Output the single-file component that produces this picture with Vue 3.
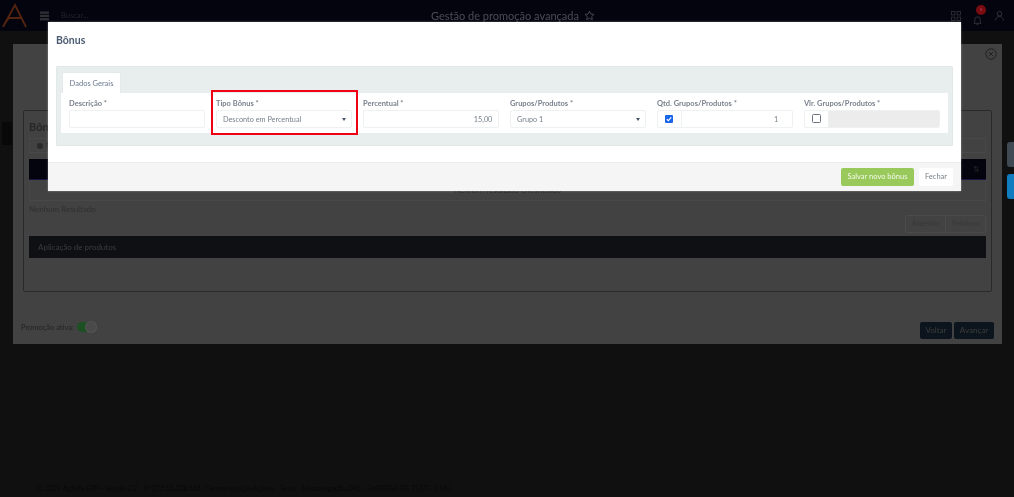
<script setup>
const fields = [
  { label: 'Descrição *', kind: 'text', value: '' },
  { label: 'Tipo Bônus *', kind: 'select', value: 'Desconto em Percentual' },
  { label: 'Percentual *', kind: 'number', value: '15,00' },
  { label: 'Grupos/Produtos *', kind: 'select', value: 'Grupo 1' },
  { label: 'Qtd. Grupos/Produtos *', kind: 'check', checked: true, value: '1' },
  { label: 'Vlr. Grupos/Produtos *', kind: 'check', checked: false, value: '' }
]
</script>

<template>
  <div class="page">
    <header class="topbar">
      <svg class="logo" width="30" height="30" viewBox="0 0 30 30" fill="none" stroke="#552410" stroke-width="1.8">
        <path d="M3 26 L15 4 L26 26" />
        <path d="M8 17 H21 M5 22 L9 17" />
      </svg>
      <svg class="menu" width="10" height="10" viewBox="0 0 10 10" fill="#2f2f36">
        <rect x="0" y="0.5" width="9" height="2.3" />
        <rect x="0" y="3.8" width="9" height="2.3" />
        <rect x="0" y="7.1" width="9" height="2.3" />
      </svg>
      <span class="search">Buscar...</span>
      <div class="title">
        <span>Gestão de promoção avançada</span>
        <svg width="11" height="11" viewBox="0 0 24 24" fill="none" stroke="#4a4a52" stroke-width="2">
          <path d="M12 2.5l3 6.3 6.8.9-5 4.7 1.3 6.8-6.1-3.3-6.1 3.3 1.3-6.8-5-4.7 6.8-.9z" />
        </svg>
      </div>
      <div class="top-icons">
        <svg width="10" height="10" viewBox="0 0 10 10" fill="none" stroke="#2f2f36" stroke-width="0.9">
          <rect x="0.5" y="0.5" width="3.4" height="3.4" />
          <rect x="6.1" y="0.5" width="3.4" height="3.4" />
          <rect x="0.5" y="6.1" width="3.4" height="3.4" />
          <rect x="6.1" y="6.1" width="3.4" height="3.4" />
        </svg>
        <span class="bell">
          <svg width="11" height="11" viewBox="0 0 24 24" fill="none" stroke="#35353c" stroke-width="2">
            <path d="M4 18c2-2 2-4 2-8a6 6 0 0 1 12 0c0 4 0 6 2 8z" />
            <path d="M10 21h4" />
          </svg>
          <b class="badge">8</b>
        </span>
        <svg width="11" height="11" viewBox="0 0 24 24" fill="none" stroke="#35353c" stroke-width="2">
          <circle cx="12" cy="8" r="5" />
          <path d="M3 23c1-6 5-9 9-9s8 3 9 9" />
        </svg>
      </div>
    </header>

    <main class="backdrop">
      <aside class="side"><span class="side-active"></span></aside>

      <section class="wizard">
        <svg class="wizard-close" width="12" height="12" viewBox="0 0 12 12" fill="none" stroke="#222" stroke-width="1">
          <circle cx="6" cy="6" r="5.2" />
          <path d="M3.8 3.8l4.4 4.4M8.2 3.8l-4.4 4.4" />
        </svg>
        <div class="box">
          <h2 class="box-title">Bônus</h2>
          <div class="new-row"><span class="dot"></span><span>Novo</span></div>
          <div class="table-head"><span class="sort">⇅</span></div>
          <div class="table-empty">Nenhum resultado encontrado</div>
          <div class="pager-row">
            <span>Nenhum Resultado</span>
            <div class="pager"><span>Anterior</span><span>Próximo</span></div>
          </div>
          <div class="apply-bar">Aplicação de produtos</div>
        </div>
        <div class="wizard-foot">
          <div class="active-toggle">
            <span>Promoção ativa:</span>
            <span class="toggle"><i></i></span>
          </div>
          <div class="nav-buttons">
            <span class="nav-btn voltar">Voltar</span>
            <span class="nav-btn avancar">Avançar</span>
          </div>
        </div>
      </section>

      <div class="side-tabs">
        <span class="tab-gray"></span>
        <span class="tab-blue"></span>
      </div>
    </main>

    <footer class="copyright">
      © 2024 <b>Agilefy ERP</b> - Versão 2.2 - IP:<b>177.55.228.161</b> | Demonstração Agilefy - Teste - <b>Homologação DRL</b> - EMPRESA DE TESTE B MG
    </footer>

    <section class="modal">
      <div class="modal-head">Bônus</div>
      <div class="modal-body">
        <div class="panel">
          <div class="tab">Dados Gerais</div>
          <div class="form">
            <div v-for="f in fields" :key="f.label" class="field">
              <label class="label">{{ f.label }}</label>
              <div v-if="f.kind === 'text'" class="input"></div>
              <div v-else-if="f.kind === 'select'" class="input select">
                <span>{{ f.value }}</span><i class="caret"></i>
              </div>
              <div v-else-if="f.kind === 'number'" class="input num">{{ f.value }}</div>
              <div v-else class="input group">
                <span class="addon">
                  <svg v-if="f.checked" width="8" height="8" viewBox="0 0 8 8">
                    <rect width="8" height="8" rx="1" fill="#1a66e8" />
                    <path d="M1.8 4.2l1.5 1.5 3-3.3" fill="none" stroke="#fff" stroke-width="1.1" />
                  </svg>
                  <span v-else class="unchecked"></span>
                </span>
                <span class="group-value" :class="{ disabled: !f.checked }">{{ f.value }}</span>
              </div>
            </div>
          </div>
        </div>
      </div>
      <div class="modal-foot">
        <span class="btn save">Salvar novo bônus</span>
        <span class="btn close">Fechar</span>
      </div>
      <div class="highlight"></div>
    </section>
  </div>
</template>

<style>
html, body { margin: 0; background: #101010; }
</style>

<style scoped>
.page {
  position: relative;
  width: 1014px;
  height: 497px;
  overflow: hidden;
  background: #101010;
  font-family: Lato, "Open Sans", sans-serif;
  filter: blur(0.45px);
}
.topbar {
  height: 31px;
  background: #04040f;
  display: flex;
  align-items: center;
  position: relative;
}
.logo { flex: none; }
.menu { margin-left: 10px; flex: none; }
.search { margin-left: 11px; font-size: 7.5px; color: #24242c; }
.title {
  position: absolute;
  left: 431px;
  top: 8px;
  display: flex;
  align-items: center;
  gap: 5px;
  font-size: 11px;
  line-height: 15px;
  color: #4c4c54;
}
.top-icons {
  position: absolute;
  right: 9px;
  top: 10px;
  display: flex;
  align-items: center;
  gap: 11px;
}
.bell { position: relative; display: block; height: 11px; }
.badge {
  position: absolute;
  left: 4px;
  top: -5px;
  width: 10px;
  height: 10px;
  border-radius: 50%;
  background: #7a0c10;
  font-size: 4px;
  line-height: 10px;
  text-align: center;
  color: #a35;
}
.backdrop {
  height: 440px;
  display: flex;
  padding-top: 13px;
  box-sizing: border-box;
  align-items: flex-start;
}
.side { width: 13px; flex: none; height: 100%; position: relative; }
.side-active {
  position: absolute;
  left: 2px;
  top: 78px;
  width: 10px;
  height: 23px;
  background: #080808;
}
.wizard {
  position: relative;
  width: 989px;
  height: 300px;
  flex: none;
  background: #424242;
  box-sizing: border-box;
  padding: 66px 10px 0 10px;
  display: flex;
  flex-direction: column;
}
.wizard-close { position: absolute; right: 5px; top: 4px; }
.box {
  height: 182px;
  box-sizing: border-box;
  border: 1px solid #2a2a2a;
  border-radius: 2px;
  padding: 9px 5px 0 5px;
  display: flex;
  flex-direction: column;
  color: #2e2e2e;
}
.box-title { margin: 0; font-size: 11px; line-height: 14px; font-weight: 700; color: #262626; }
.new-row {
  height: 15px;
  margin-top: 4px;
  display: flex;
  align-items: center;
  gap: 3px;
  font-size: 7.5px;
  color: #2a2a2a;
  border: 1px solid #484848;
  padding-left: 7px;
  box-sizing: border-box;
}
.dot { width: 6px; height: 6px; border-radius: 50%; background: #2a2a2a; }
.table-head {
  height: 21px;
  margin-top: 6px;
  box-sizing: border-box;
  background: #04040f;
  border-bottom: 1px solid #1c1540;
  display: flex;
  align-items: center;
  justify-content: flex-end;
  padding-right: 6px;
}
.sort { font-size: 8px; color: #222; }
.table-empty {
  height: 21px;
  font-size: 8px;
  line-height: 20px;
  text-align: center;
  color: #252525;
  border: 1px solid #484848;
  border-top: 0;
  box-sizing: border-box;
}
.pager-row {
  height: 35px;
  display: flex;
  justify-content: space-between;
  align-items: flex-start;
  font-size: 8px;
  color: #303030;
  line-height: 12px;
  padding-top: 2px;
  box-sizing: border-box;
}
.pager {
  display: flex;
  margin-top: 12px;
  height: 18px;
  box-sizing: border-box;
  border: 1px solid #4a4a4a;
  border-radius: 2px;
  color: #383838;
  font-size: 7.5px;
  line-height: 16px;
}
.pager span { padding: 0 6px; }
.pager span + span { border-left: 1px solid #4a4a4a; }
.apply-bar {
  height: 22px;
  background: #0f1014;
  color: #3c3c3c;
  font-size: 8px;
  line-height: 22px;
  padding-left: 9px;
}
.wizard-foot {
  flex: 1;
  display: flex;
  justify-content: space-between;
  margin-right: -2px;
  margin-left: -2px;
  padding-top: 30px;
  box-sizing: border-box;
}
.active-toggle {
  display: flex;
  align-items: center;
  gap: 3px;
  height: 10px;
  font-size: 7.5px;
  color: #232323;
}
.toggle {
  width: 19px;
  height: 10px;
  border-radius: 5px;
  background: #1c5023;
  position: relative;
}
.toggle i {
  position: absolute;
  right: 0;
  top: 0;
  width: 10px;
  height: 10px;
  border-radius: 50%;
  background: #4a4a4a;
  box-shadow: 0 0 0 1px #555;
}
.nav-buttons { display: flex; gap: 2px; height: 17px; }
.nav-btn {
  background: #0c151d;
  color: #3e3e3e;
  border-radius: 2px;
  font-size: 8px;
  line-height: 17px;
  text-align: center;
}
.voltar { width: 32px; }
.avancar { width: 40px; }
.side-tabs {
  position: absolute;
  left: 1007px;
  top: 142px;
  display: flex;
  flex-direction: column;
  gap: 7px;
}
.tab-gray { width: 10px; height: 25px; background: #3f4a55; border-radius: 3px 0 0 3px; }
.tab-blue { width: 10px; height: 25px; background: #0f7dc0; border-radius: 3px 0 0 3px; }
.copyright {
  padding-left: 37px;
  font-size: 7px;
  line-height: 12px;
  margin-top: 11px;
  color: #0a0a0a;
  white-space: nowrap;
}

.modal {
  position: absolute;
  left: 48px;
  top: 22px;
  width: 913px;
  height: 169px;
  background: #fff;
  display: flex;
  flex-direction: column;
  box-shadow: 0 0 2px rgba(255, 255, 255, 0.4);
}
.modal-head {
  height: 44px;
  box-sizing: border-box;
  padding: 11px 0 0 8px;
  font-size: 10.5px;
  line-height: 15px;
  font-weight: 700;
  color: #4a5a70;
}
.modal-body { flex: 1; padding: 0 8px; }
.panel {
  height: 80px;
  background: #e8eded;
  border-radius: 2px;
  padding: 6px 5px 0 5px;
  box-sizing: border-box;
  box-shadow: inset 0 0 0 1px #e2e8e8;
}
.tab {
  width: 59px;
  height: 21px;
  margin-left: 1px;
  box-sizing: border-box;
  background: #fff;
  border-radius: 2px 2px 0 0;
  border: 1px solid #e4e9ea;
  border-bottom: 0;
  font-size: 7.5px;
  line-height: 21px;
  text-align: center;
  color: #6b7a8e;
}
.form {
  height: 40px;
  background: #fff;
  display: grid;
  grid-template-columns: repeat(6, 136.4px);
  column-gap: 10.6px;
  padding: 0 8px;
  box-sizing: border-box;
}
.field { display: flex; flex-direction: column; }
.label {
  height: 17px;
  font-size: 7.5px;
  line-height: 21px;
  font-weight: 700;
  color: #7a828e;
  white-space: nowrap;
}
.input {
  height: 18px;
  box-sizing: border-box;
  border: 1px solid #eef1f2;
  border-radius: 2px;
  background: #fff;
  font-size: 7.3px;
  line-height: 16px;
  color: #77808c;
  display: flex;
  align-items: center;
}
.select { justify-content: space-between; padding: 1px 5px 0 6px; }
.caret {
  width: 0;
  height: 0;
  border-left: 2.5px solid transparent;
  border-right: 2.5px solid transparent;
  border-top: 3px solid #4a5568;
}
.num { justify-content: flex-end; padding: 1px 6px 0 0; }
.group { overflow: hidden; }
.addon {
  width: 24px;
  height: 100%;
  flex: none;
  border-right: 1px solid #eef1f2;
  display: flex;
  align-items: center;
  justify-content: center;
  box-sizing: border-box;
  padding-bottom: 1px;
}
.unchecked {
  width: 7px;
  height: 7px;
  border: 1px solid #6b7280;
  border-radius: 1.5px;
}
.group-value {
  flex: 1;
  height: 100%;
  text-align: right;
  padding-right: 14px;
  line-height: 18px;
}
.group-value.disabled { background: #ececec; }
.modal-foot {
  height: 29px;
  box-sizing: border-box;
  background: #f5f5f5;
  border-top: 1px solid #ececec;
  display: flex;
  justify-content: flex-end;
  align-items: center;
  gap: 5px;
  padding-right: 8px;
}
.btn {
  height: 18px;
  box-sizing: border-box;
  border-radius: 2px;
  font-size: 7.5px;
  line-height: 18px;
  text-align: center;
}
.save { width: 73px; background: #98c95a; color: #f4f9ec; }
.close { width: 34px; background: #fff; color: #78808a; }
.highlight {
  position: absolute;
  left: 163px;
  top: 68px;
  width: 147px;
  height: 45px;
  box-sizing: border-box;
  border: 2.5px solid #f00014;
  pointer-events: none;
}
</style>
